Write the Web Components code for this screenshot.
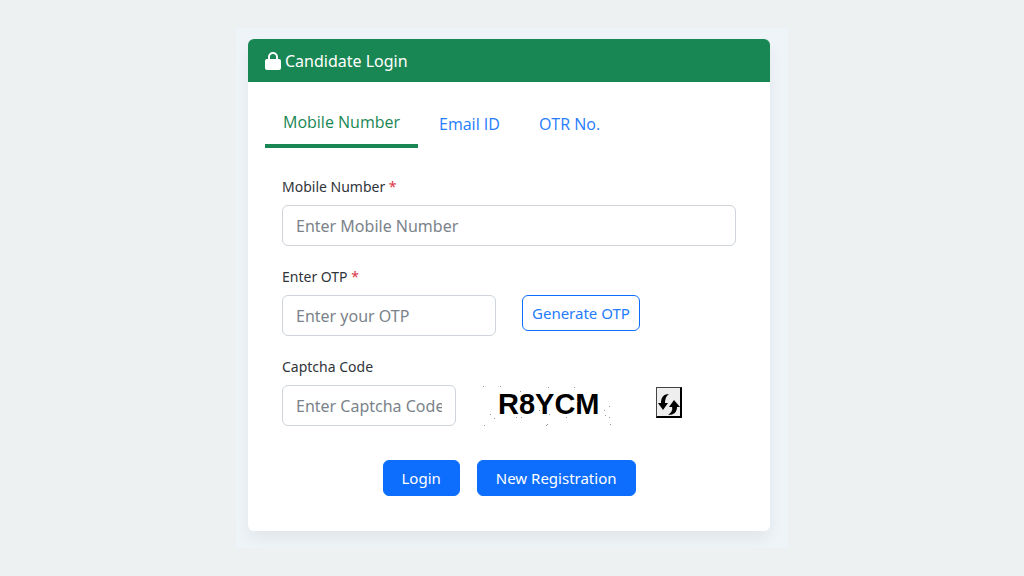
<!DOCTYPE html>
<html lang="en">
<head>
<meta charset="utf-8">
<meta name="viewport" content="width=device-width, initial-scale=1">
<title>Candidate Login</title>
<style>
body {
    margin: 0;
    min-height: 100vh;
    display: flex;
    align-items: center;
    justify-content: center;
    background-color: #edf1f2;
    color: #30353a;
    font-family: 'Noto Sans', 'Open Sans', sans-serif;
}
</style>
</head>
<body>

<login-card>
    <span slot="title">Candidate Login</span>
    <tab-link slot="tabs" active>Mobile Number</tab-link>
    <tab-link slot="tabs">Email ID</tab-link>
    <tab-link slot="tabs">OTR No.</tab-link>

    <form-field label="Mobile Number" placeholder="Enter Mobile Number" type="tel" required></form-field>
    <form-field label="Enter OTP" placeholder="Enter your OTP" size="medium" required>
        <action-button variant="outline">Generate OTP</action-button>
    </form-field>
    <form-field label="Captcha Code" placeholder="Enter Captcha Code" size="small">
        <captcha-code code="R8YCM"></captcha-code>
    </form-field>

    <action-button slot="actions">Login</action-button>
    <action-button slot="actions">New Registration</action-button>
</login-card>

<script>
function makeTemplate(html) {
    const template = document.createElement('template');
    template.innerHTML = html;
    return template;
}

// card with the green header, the tab row, the fields and the buttons
const cardTemplate = makeTemplate(`
    <style>

:host {
    display: block;
    box-sizing: border-box;
    width: 100%;
    max-width: 552px;
    padding: 11px 18px 17px 12px;
    background-color: #eef4f8;
    overflow: hidden;
}

#card {
    background-color: #ffffff;
    border-radius: 6px;
    box-shadow: 0 8px 16px rgba(0, 0, 0, 0.06);
}

header {
    display: flex;
    align-items: center;
    gap: 4px;
    height: 43px;
    padding: 0 17px;
    background-color: #198754;
    color: #ffffff;
    border-radius: 6px 6px 0 0;
}

h1 {
    margin: 0;
    font-size: 16px;
    font-weight: 400;
    line-height: 26px;
}

#content {
    padding: 17px 17px 35px;
}

nav {
    display: flex;
    gap: 3px;
    height: 49px;
}

form {
    display: flex;
    flex-direction: column;
    gap: 18px;
    padding: 26px 17px 0;
}

#actions {
    display: flex;
    justify-content: center;
    gap: 17px;
    margin-top: 16px;
}
    </style>

    <div id="card">
        <header>
            <svg width="16" height="18" viewBox="0 0 16 18" aria-hidden="true">
                <path d="M4 8V5a4 4 0 0 1 8 0v3" fill="none" stroke="#fff" stroke-width="2"/>
                <rect y="7" width="16" height="11" rx="2" fill="#fff"/>
            </svg>
            <h1><slot name="title"></slot></h1>
        </header>
        <div id="content">
            <nav><slot name="tabs"></slot></nav>
            <form>
                <slot></slot>
                <div id="actions"><slot name="actions"></slot></div>
            </form>
        </div>
    </div>
`);

class LoginCard extends HTMLElement {
    constructor() {
        super();
        this.attachShadow({mode: 'open'});
        this.shadowRoot.appendChild(cardTemplate.content.cloneNode(true));
    }
}

const tabTemplate = makeTemplate(`
    <style>

:host {
    display: flex;
}

a {
    display: flex;
    align-items: center;
    padding: 0 18px;
    color: #257cfd;
    font-family: 'Open Sans', 'Noto Sans', sans-serif;
    font-size: 16px;
    line-height: 26px;
    text-decoration: none;
    white-space: nowrap;
}

:host([active]) a {
    color: #198754;
    border-bottom: 4px solid #198754;
}
    </style>

    <a href="#"><slot></slot></a>
`);

class TabLink extends HTMLElement {
    constructor() {
        super();
        this.attachShadow({mode: 'open'});
        this.shadowRoot.appendChild(tabTemplate.content.cloneNode(true));
    }

    connectedCallback() {
        if (this.hasAttribute('active')) {
            this.shadowRoot.querySelector('a').setAttribute('aria-current', 'page');
        }
    }
}

// label and text box, anything slotted stands to the right of the box
const fieldTemplate = makeTemplate(`
    <style>

:host {
    display: block;
}

label {
    display: block;
    margin-bottom: 6px;
    font-size: 14px;
    line-height: 25px;
}

#star {
    color: #dc3545;
}

#row {
    display: flex;
    gap: 26px;
}

input {
    box-sizing: border-box;
    width: 100%;
    min-width: 0;
    height: 41px;
    padding: 0 13px;
    border: 1px solid #ced4da;
    border-radius: 6px;
    background-color: #ffffff;
    color: #212529;
    font-family: inherit;
    font-size: 16px;
}

input::placeholder {
    color: #7b838a;
    opacity: 1;
}

:host([size="medium"]) input {
    width: 214px;
}

:host([size="small"]) input {
    width: 174px;
}
    </style>

    <label for="field"><span id="text"></span> <span id="star">*</span></label>
    <div id="row">
        <input id="field">
        <slot></slot>
    </div>
`);

class FormField extends HTMLElement {
    constructor() {
        super();
        this.attachShadow({mode: 'open'});
        this.shadowRoot.appendChild(fieldTemplate.content.cloneNode(true));
    }

    connectedCallback() {
        const input = this.shadowRoot.querySelector('input');
        input.type = this.getAttribute('type') || 'text';
        input.placeholder = this.getAttribute('placeholder');
        input.required = this.hasAttribute('required');
        this.shadowRoot.querySelector('#text').textContent = this.getAttribute('label');
        if (!input.required) {
            this.shadowRoot.querySelector('#star').remove();
        }
    }
}

const buttonTemplate = makeTemplate(`
    <style>

:host {
    display: block;
}

button {
    height: 36px;
    padding: 0 18px;
    border: 1px solid #0d6efd;
    border-radius: 6px;
    background-color: #0d6efd;
    color: #ffffff;
    font-family: inherit;
    font-size: 15px;
    white-space: nowrap;
    cursor: pointer;
}

:host([variant="outline"]) button {
    padding: 0 9px;
    background-color: #ffffff;
    color: #257cfd;
}
    </style>

    <button type="button"><slot></slot></button>
`);

class ActionButton extends HTMLElement {
    constructor() {
        super();
        this.attachShadow({mode: 'open'});
        this.shadowRoot.appendChild(buttonTemplate.content.cloneNode(true));
    }
}

// captcha drawing with its speckles, and the button that reloads it
const captchaTemplate = makeTemplate(`
    <style>

:host {
    display: flex;
    gap: 44px;
}

text {
    font-family: 'Liberation Sans', Arial, sans-serif;
    font-size: 29px;
    font-weight: 700;
}

button {
    width: 26px;
    height: 31px;
    margin-top: 2px;
    padding: 0;
    border: 1px solid #444444;
    border-right: 2px solid #000000;
    border-bottom: 2px solid #000000;
    background-color: #eeeeee;
    cursor: pointer;
}

button svg {
    display: block;
}
    </style>

    <svg width="130" height="41" viewBox="0 0 130 41">
        <text x="16" y="29"></text>
        <g id="dots" fill="#999"></g>
    </svg>
    <button type="button" aria-label="Refresh captcha">
        <svg width="23" height="28" viewBox="0 0 23 28" aria-hidden="true">
            <path d="M12 6C7 6 4 9 4 15H1L6 22L11 15H8C8 11 9 8 12 6Z"/>
            <path d="M11 27C17 27 20 24 20 19H23L17 12L12 19H15C16 22 14 25 11 27Z"/>
        </svg>
    </button>
`);

const dots = [[1, 1], [18, 1], [38, 6], [66, 2], [92, 2], [8, 29], [12, 33], [2, 40], [34, 32],
    [39, 32], [65, 39], [64, 40], [84, 32], [122, 25], [123, 30], [127, 21], [127, 32], [128, 39],
    [57, 25], [67, 29], [95, 16]];

class CaptchaCode extends HTMLElement {
    constructor() {
        super();
        this.attachShadow({mode: 'open'});
        this.shadowRoot.appendChild(captchaTemplate.content.cloneNode(true));
    }

    connectedCallback() {
        this.shadowRoot.querySelector('text').textContent = this.getAttribute('code');
        this.shadowRoot.querySelector('#dots').innerHTML = dots
            .map(([x, y]) => `<rect x="${x}" y="${y}" width="1" height="1"/>`)
            .join('');
    }
}

window.customElements.define('login-card', LoginCard);
window.customElements.define('tab-link', TabLink);
window.customElements.define('form-field', FormField);
window.customElements.define('action-button', ActionButton);
window.customElements.define('captcha-code', CaptchaCode);
</script>
</body>
</html>
